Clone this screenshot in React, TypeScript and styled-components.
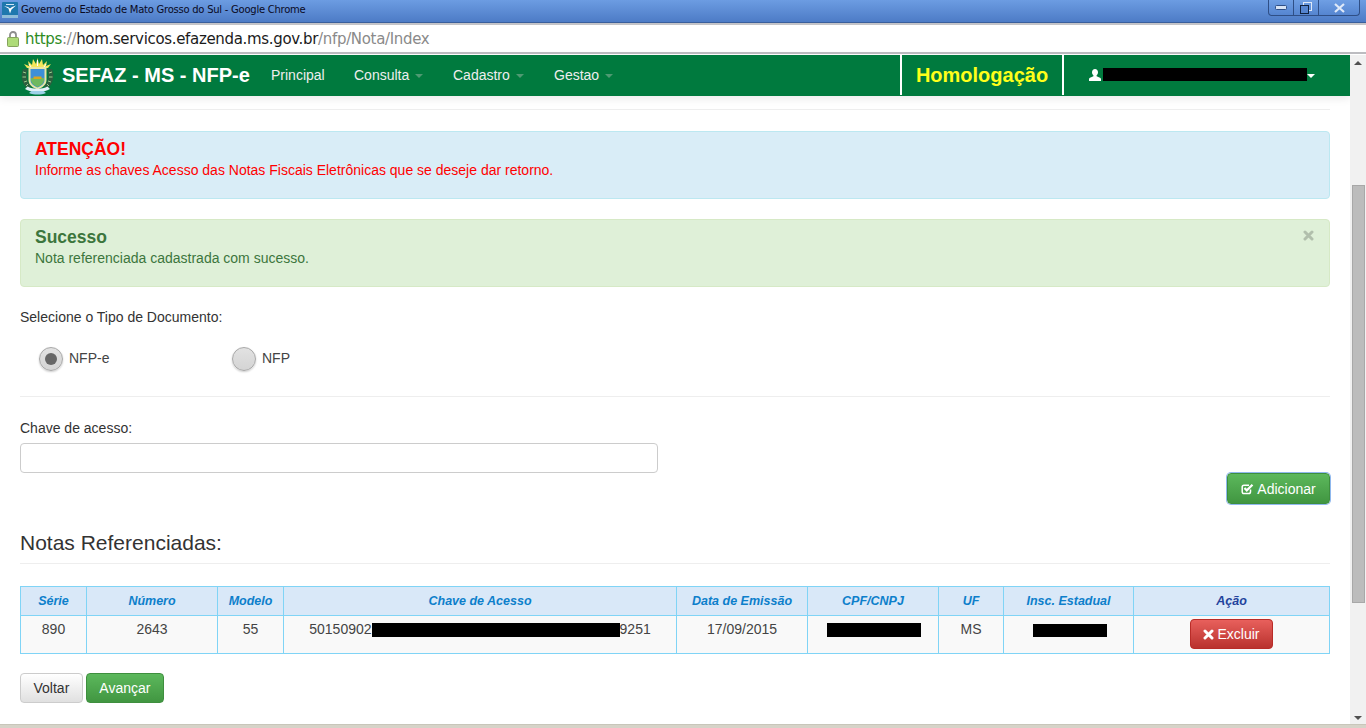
import styled, { createGlobalStyle } from "styled-components";

const GlobalStyle = createGlobalStyle`
  html, body {
    margin: 0;
    height: 728px;
    overflow: hidden;
    background: #fff;
    font-family: "Liberation Sans", Arial, sans-serif;
    color: #333;
  }
  * { box-sizing: border-box; }
`;

const Page = styled.div`
  width: 1366px;
  height: 728px;
  display: flex;
  flex-direction: column;
  overflow: hidden;
`;

const TitleBar = styled.div`
  height: 23px;
  flex: none;
  display: flex;
  align-items: flex-start;
  padding: 2px 6px 0 2px;
  background: linear-gradient(#6c9ce2, #4d7bc6);
  border-bottom: 1px solid #3a5f9c;
`;

const TitleText = styled.span`
  font-family: "DejaVu Sans", sans-serif;
  font-size: 10px;
  line-height: 16px;
  margin-left: 3px;
  color: #0a0a1e;
  letter-spacing: -0.25px;
`;

const WindowButtons = styled.div`
  margin: -2px 0 0 auto;
  height: 16px;
  display: flex;
  border: 1px solid #2f4f86;
  border-top: none;
  border-radius: 0 0 4px 4px;
  background: linear-gradient(#6f9fe4, #5585d0);
`;

const WindowButton = styled.div<{ $w: number; $last?: boolean }>`
  width: ${(p) => p.$w}px;
  display: flex;
  align-items: center;
  justify-content: center;
  border-right: ${(p) => (p.$last ? "none" : "1px solid #2f4f86")};
`;

const AddressBar = styled.div`
  height: 31px;
  flex: none;
  display: flex;
  align-items: center;
  padding: 0 0 0 7px;
  background: #fff;
  border-top: 2px solid #c4c4c8;
  border-bottom: 2px solid #bcbcc0;
`;

const Url = styled.span`
  font-family: "DejaVu Sans", sans-serif;
  font-size: 15px;
  margin-left: 6px;
  letter-spacing: -0.33px;
  color: #1b1b1b;
`;

const UrlScheme = styled.span`
  color: #2e8b1f;
`;

const UrlMuted = styled.span`
  color: #8a8a8a;
`;

const Body = styled.div`
  flex: 1;
  min-height: 0;
  display: flex;
  margin-top: 1px;
`;

const Main = styled.div`
  flex: 1;
  min-width: 0;
  display: flex;
  flex-direction: column;
`;

const Nav = styled.nav`
  height: 41px;
  flex: none;
  display: flex;
  align-items: center;
  background: #007a3e;
  padding-left: 21px;
  box-shadow: 0 3px 8px rgba(0, 0, 0, 0.08);
`;

const Brand = styled.span`
  margin-left: 8px;
  width: 209px;
  font-size: 20px;
  font-weight: bold;
  color: #fff;
  white-space: nowrap;
`;

const NavLink = styled.span<{ $w: number }>`
  width: ${(p) => p.$w}px;
  margin-top: -2px;
  font-size: 14px;
  color: #eee;
  display: flex;
  align-items: center;
  white-space: nowrap;
`;

const Caret = styled.span<{ $color?: string; $gap?: number }>`
  display: inline-block;
  margin-left: ${(p) => p.$gap ?? 6}px;
  margin-top: 2px;
  border-left: 4px solid transparent;
  border-right: 4px solid transparent;
  border-top: 4px solid ${(p) => p.$color || "#4f9a72"};
`;

const NavRight = styled.div`
  margin-left: auto;
  height: 41px;
  display: flex;
  align-items: center;
`;

const EnvBox = styled.div`
  height: 40px;
  align-self: flex-start;
  width: 164px;
  display: flex;
  align-items: center;
  justify-content: center;
  border-left: 2px solid #fff;
  border-right: 2px solid #fff;
  font-size: 20px;
  font-weight: bold;
  color: #ffff1a;
`;

const UserBox = styled.div`
  width: 286px;
  display: flex;
  align-items: center;
  gap: 2px;
  padding-left: 25px;
  margin-top: -2px;
`;

const Redacted = styled.span<{ $w: number; $h: number }>`
  display: inline-block;
  width: ${(p) => p.$w}px;
  height: ${(p) => p.$h}px;
  background: #000;
  vertical-align: middle;
`;

const Content = styled.div`
  flex: 1;
  padding: 13px 20px 0;
  display: flex;
  flex-direction: column;
`;

const Rule = styled.hr`
  margin: 0;
  border: none;
  border-top: 1px solid #eee;
  height: 0;
  flex: none;
`;

const Alert = styled.div<{ $kind: "info" | "success"; $top: number }>`
  position: relative;
  height: 68px;
  flex: none;
  margin-top: ${(p) => p.$top}px;
  padding: 8px 14px;
  border-radius: 4px;
  border: 1px solid ${(p) => (p.$kind === "info" ? "#bce8f1" : "#d6e9c6")};
  background: ${(p) => (p.$kind === "info" ? "#d9edf7" : "#dff0d8")};
  color: ${(p) => (p.$kind === "info" ? "#ff0000" : "#3c763d")};
`;

const AlertTitle = styled.div`
  font-size: 17.5px;
  line-height: 18px;
  font-weight: bold;
`;

const AlertText = styled.div`
  font-size: 14px;
  line-height: 20px;
  margin-top: 2px;
`;

const Close = styled.span`
  position: absolute;
  top: 10px;
  right: 15px;
  display: flex;
  color: #000;
  opacity: 0.2;
`;

const FieldLabel = styled.div<{ $top: number }>`
  margin-top: ${(p) => p.$top}px;
  font-size: 14px;
  line-height: 18px;
`;

const RadioRow = styled.div`
  display: flex;
  margin: 19px 0 25px 19px;
`;

const RadioOption = styled.div`
  width: 193px;
  display: flex;
  align-items: center;
  font-size: 14px;
  color: #444;
`;

const RadioDot = styled.span<{ $checked?: boolean }>`
  width: 24px;
  height: 24px;
  margin: 2px 6px 0 0;
  border-radius: 50%;
  border: 1px solid #a8a8a8;
  background: linear-gradient(#e2e2e2, #d4d4d4);
  box-shadow: 0 1px 2px rgba(0, 0, 0, 0.2);
  display: flex;
  align-items: center;
  justify-content: center;

  &::after {
    content: "";
    display: ${(p) => (p.$checked ? "block" : "none")};
    width: 12px;
    height: 12px;
    border-radius: 50%;
    background: #666;
  }
`;

const KeyInput = styled.input`
  display: block;
  width: 638px;
  height: 30px;
  margin-top: 6px;
  border: 1px solid #ccc;
  border-radius: 4px;
  background: #fff;
`;

const AddRow = styled.div`
  display: flex;
  justify-content: flex-end;
`;

const Button = styled.button<{ $kind: "default" | "success" | "danger" }>`
  height: 30px;
  padding: 0 12.5px;
  display: inline-flex;
  align-items: center;
  justify-content: center;
  border-radius: 4px;
  font-family: inherit;
  font-size: 14px;
  border: 1px solid
    ${(p) =>
      p.$kind === "default" ? "#ccc" : p.$kind === "success" ? "#3e8f3e" : "#b92c28"};
  color: ${(p) => (p.$kind === "default" ? "#333" : "#fff")};
  background: ${(p) =>
    p.$kind === "default"
      ? "linear-gradient(#fff, #e0e0e0)"
      : p.$kind === "success"
        ? "linear-gradient(#5cb85c, #419641)"
        : "linear-gradient(#e8605c, #b9322e)"};
`;

const AddButton = styled(Button)`
  width: 103px;
  height: 31px;
  padding: 0;
  border: 1px solid #3e8f3e;
  box-shadow: inset 0 0 0 0 #fff, 0 0 0 1px #8fb8ee;
  gap: 3px;
`;

const SectionTitle = styled.h3`
  margin: 26px 0 7px;
  font-size: 21px;
  line-height: 26px;
  font-weight: normal;
  color: #333;
`;

const Table = styled.table`
  margin-top: 22px;
  width: 1309px;
  table-layout: fixed;
  border-collapse: collapse;
  font-size: 14px;
`;

const Th = styled.th<{ $dark?: boolean }>`
  height: 29px;
  padding: 0;
  border: 1px solid #80d4f6;
  background: #d9e8f8;
  font-size: 12.5px;
  font-style: italic;
  font-weight: bold;
  color: ${(p) => (p.$dark ? "#23439c" : "#0d7fcb")};
`;

const Td = styled.td<{ $nudge?: boolean }>`
  height: 38px;
  padding: 4px 0 0 ${(p) => (p.$nudge ? 2 : 0)}px;
  vertical-align: top;
  text-align: center;
  border: 1px solid #80d4f6;
  background: #f9f9f9;
  color: #444;
  font-size: 14px;
  line-height: 18px;
`;

const ActionTd = styled(Td)`
  padding-top: 3px;
`;

const ExcludeButton = styled(Button)`
  width: 83px;
  gap: 3px;
  padding: 0;
`;

const Footer = styled.div`
  display: flex;
  gap: 3px;
  margin-top: 19px;
`;

const Scrollbar = styled.div`
  width: 16px;
  flex: none;
  background: #f1f1f1;
  display: flex;
  flex-direction: column;
  align-items: center;
  position: relative;
`;

const ScrollArrow = styled.span<{ $down?: boolean }>`
  position: absolute;
  left: 4px;
  ${(p) => (p.$down ? "bottom: 4px;" : "top: 6px;")}
  border-left: 4px solid transparent;
  border-right: 4px solid transparent;
  ${(p) => (p.$down ? "border-top: 4px solid #505050;" : "border-bottom: 4px solid #505050;")}
`;

const ScrollThumb = styled.div`
  width: 13px;
  height: 418px;
  margin-top: 130px;
  background: #bcbcbc;
  border: 1px solid #a8a8a8;
`;

const BottomEdge = styled.div`
  height: 4px;
  flex: none;
  background: #d6d3c8;
  border-top: 1px solid #c8c6ba;
`;

function AppIcon() {
  return (
    <svg width="16" height="16" viewBox="0 0 16 16">
      <rect width="16" height="16" rx="1" fill="#1f78ae" />
      <rect y="13" width="16" height="3" fill="#8fbcd8" />
      <path d="M2 4l4.500 2.500L8 11.500l1.500-4L14 3.500 10 5 8 6.500 6 5z" fill="#fff" />
      <path d="M4 2h8v1H4z" fill="#cfe6f4" />
    </svg>
  );
}

function LockIcon() {
  return (
    <svg width="12" height="16" viewBox="0 0 12 16">
      <path d="M3 7V4a3 3 0 0 1 6 0v3" fill="none" stroke="#8d8d8d" strokeWidth="1.800" />
      <rect x="0.500" y="6.500" width="11" height="9" rx="1" fill="#aedb78" stroke="#85a35c" />
    </svg>
  );
}

function Coat() {
  return (
    <svg width="33" height="38" viewBox="0 0 33 38">
      <path d="M6 11L3 7l5 2-1-5 4 4 1-6 3 5 1.500-6L18 7l3-5 1 6 4-4-1 5 5-2-3 4z" fill="#f4e65a" />
      <path d="M8 7l2 3M16.500 3v6M25 7l-2 3" stroke="#fff" strokeWidth="1" />
      <path d="M2 12c-3 7-1 15 5 20l3-3C5 25 5 17 7 12z" fill="#2c5f3f" />
      <path d="M31 12c3 7 1 15-5 20l-3-3c5-4 5-12 3-17z" fill="#2c5f3f" />
      <path d="M2 15l3 1M1.500 20l3.500 0M3 25l3-1M5 29l2-2M31 15l-3 1M31.500 20H28M30 25l-3-1M28 29l-2-2" stroke="#9ccf8e" strokeWidth="1" />
      <path d="M7.500 10h18v13c0 5-4.500 8-9 9.500-4.500-1.500-9-4.500-9-9.500z" fill="#e9e6a6" />
      <path d="M9.500 12h14v11c0 4-3.500 6-7 7.500-3.500-1.500-7-3.500-7-7.500z" fill="#3d8fd8" />
      <path d="M10 21h13v2.500c-.5 3.500-3.500 5-6.500 6.500-3-1.500-6-3-6.500-6.500z" fill="#6fb85f" />
      <path d="M12.500 19.500h8v2.500h-8z" fill="#d9a520" />
      <path d="M4 32c6 4 19 4 25 0l-2.500-2.500c-5 3-15 3-20 0z" fill="#e3f1f8" />
      <path d="M8 36c5 2 12 2 17 0l-2.500-2h-12z" fill="#9fd0e8" />
    </svg>
  );
}

function UserIcon() {
  return (
    <svg width="12" height="12" viewBox="0 0 12 12">
      <path
        d="M6 0c1.800 0 3 1.300 3 3.200 0 1.300-.6 2.500-1.400 3.100v1l3.400 1.500c.6.300 1 .8 1 1.400V12H0v-1.800c0-.6.400-1.100 1-1.400l3.400-1.500v-1C3.600 5.700 3 4.500 3 3.200 3 1.300 4.200 0 6 0z"
        fill="#fff"
      />
    </svg>
  );
}

function TimesIcon({ size = 11 }: { size?: number }) {
  return (
    <svg width={size} height={size} viewBox="0 0 11 11">
      <path d="M2 2l7 7M9 2l-7 7" fill="none" stroke="currentColor" strokeWidth="3" strokeLinecap="round" />
    </svg>
  );
}

function CheckSquareIcon() {
  return (
    <svg width="13" height="12" viewBox="0 0 13 12">
      <path
        d="M9.500 6.500v2.300c0 1.100-.7 1.800-1.800 1.800H3c-1.100 0-1.800-.7-1.800-1.800V4c0-1.100.7-1.800 1.800-1.800h5"
        fill="none"
        stroke="currentColor"
        strokeWidth="1.500"
      />
      <path d="M3.500 5l2.300 2.400L11.500 1.800" fill="none" stroke="currentColor" strokeWidth="2.200" />
    </svg>
  );
}

const columns = [66, 131, 66, 393, 131, 131, 65, 130, 196];
const headers = [
  "Série",
  "Número",
  "Modelo",
  "Chave de Acesso",
  "Data de Emissão",
  "CPF/CNPJ",
  "UF",
  "Insc. Estadual",
];

export default function App() {
  return (
    <Page>
      <GlobalStyle />
      <TitleBar>
        <AppIcon />
        <TitleText>Governo do Estado de Mato Grosso do Sul - Google Chrome</TitleText>
        <WindowButtons>
          <WindowButton $w={25}>
            <svg width="12" height="6" viewBox="0 0 12 6">
              <rect x="0.500" y="0.500" width="11" height="4" rx="1" fill="#d7e3f5" stroke="#2f4f86" />
            </svg>
          </WindowButton>
          <WindowButton $w={25}>
            <svg width="12" height="12" viewBox="0 0 12 12">
              <rect x="3.500" y="0.500" width="8" height="8" fill="none" stroke="#dfe9f8" />
              <rect x="0.500" y="3.500" width="8" height="8" fill="#5585d0" stroke="#10223f" />
            </svg>
          </WindowButton>
          <WindowButton $w={40} $last>
            <svg width="11" height="10" viewBox="0 0 11 10">
              <path d="M1 1l9 8M10 1L1 9" stroke="#dfe9f8" strokeWidth="2.200" />
            </svg>
          </WindowButton>
        </WindowButtons>
      </TitleBar>
      <AddressBar>
        <LockIcon />
        <Url>
          <UrlScheme>https</UrlScheme>
          <UrlMuted>://</UrlMuted>
          hom.servicos.efazenda.ms.gov.br
          <UrlMuted>/nfp/Nota/Index</UrlMuted>
        </Url>
      </AddressBar>
      <Body>
        <Main>
          <Nav>
            <Coat />
            <Brand>SEFAZ - MS - NFP-e</Brand>
            <NavLink $w={83}>Principal</NavLink>
            <NavLink $w={99}>
              Consulta
              <Caret />
            </NavLink>
            <NavLink $w={101}>
              Cadastro
              <Caret />
            </NavLink>
            <NavLink $w={70}>
              Gestao
              <Caret />
            </NavLink>
            <NavRight>
              <EnvBox>Homologação</EnvBox>
              <UserBox>
                <UserIcon />
                <Redacted $w={204} $h={13} />
                <Caret $color="#fff" $gap={-2} />
              </UserBox>
            </NavRight>
          </Nav>
          <Content>
            <Rule />
            <Alert $kind="info" $top={21}>
              <AlertTitle>ATENÇÃO!</AlertTitle>
              <AlertText>
                Informe as chaves Acesso das Notas Fiscais Eletrônicas que se deseje dar retorno.
              </AlertText>
            </Alert>
            <Alert $kind="success" $top={20}>
              <AlertTitle>Sucesso</AlertTitle>
              <AlertText>Nota referenciada cadastrada com sucesso.</AlertText>
              <Close>
                <TimesIcon />
              </Close>
            </Alert>
            <FieldLabel $top={21}>Selecione o Tipo de Documento:</FieldLabel>
            <RadioRow>
              <RadioOption>
                <RadioDot $checked />
                NFP-e
              </RadioOption>
              <RadioOption>
                <RadioDot />
                NFP
              </RadioOption>
            </RadioRow>
            <Rule />
            <FieldLabel $top={22}>Chave de acesso:</FieldLabel>
            <KeyInput />
            <AddRow>
              <AddButton $kind="success">
                <CheckSquareIcon />
                Adicionar
              </AddButton>
            </AddRow>
            <SectionTitle>Notas Referenciadas:</SectionTitle>
            <Rule />
            <Table>
              <colgroup>
                {columns.map((w, i) => (
                  <col key={i} width={w} />
                ))}
              </colgroup>
              <thead>
                <tr>
                  {headers.map((h) => (
                    <Th key={h}>{h}</Th>
                  ))}
                  <Th $dark>Ação</Th>
                </tr>
              </thead>
              <tbody>
                <tr>
                  <Td>890</Td>
                  <Td>2643</Td>
                  <Td>55</Td>
                  <Td>
                    50150902
                    <Redacted $w={248} $h={14} />
                    9251
                  </Td>
                  <Td>17/09/2015</Td>
                  <Td $nudge>
                    <Redacted $w={94} $h={14} />
                  </Td>
                  <Td>MS</Td>
                  <Td $nudge>
                    <Redacted $w={74} $h={13} />
                  </Td>
                  <ActionTd>
                    <ExcludeButton $kind="danger">
                      <TimesIcon />
                      Excluir
                    </ExcludeButton>
                  </ActionTd>
                </tr>
              </tbody>
            </Table>
            <Footer>
              <Button $kind="default">Voltar</Button>
              <Button $kind="success">Avançar</Button>
            </Footer>
          </Content>
        </Main>
        <Scrollbar>
          <ScrollArrow />
          <ScrollThumb />
          <ScrollArrow $down />
        </Scrollbar>
      </Body>
      <BottomEdge />
    </Page>
  );
}
